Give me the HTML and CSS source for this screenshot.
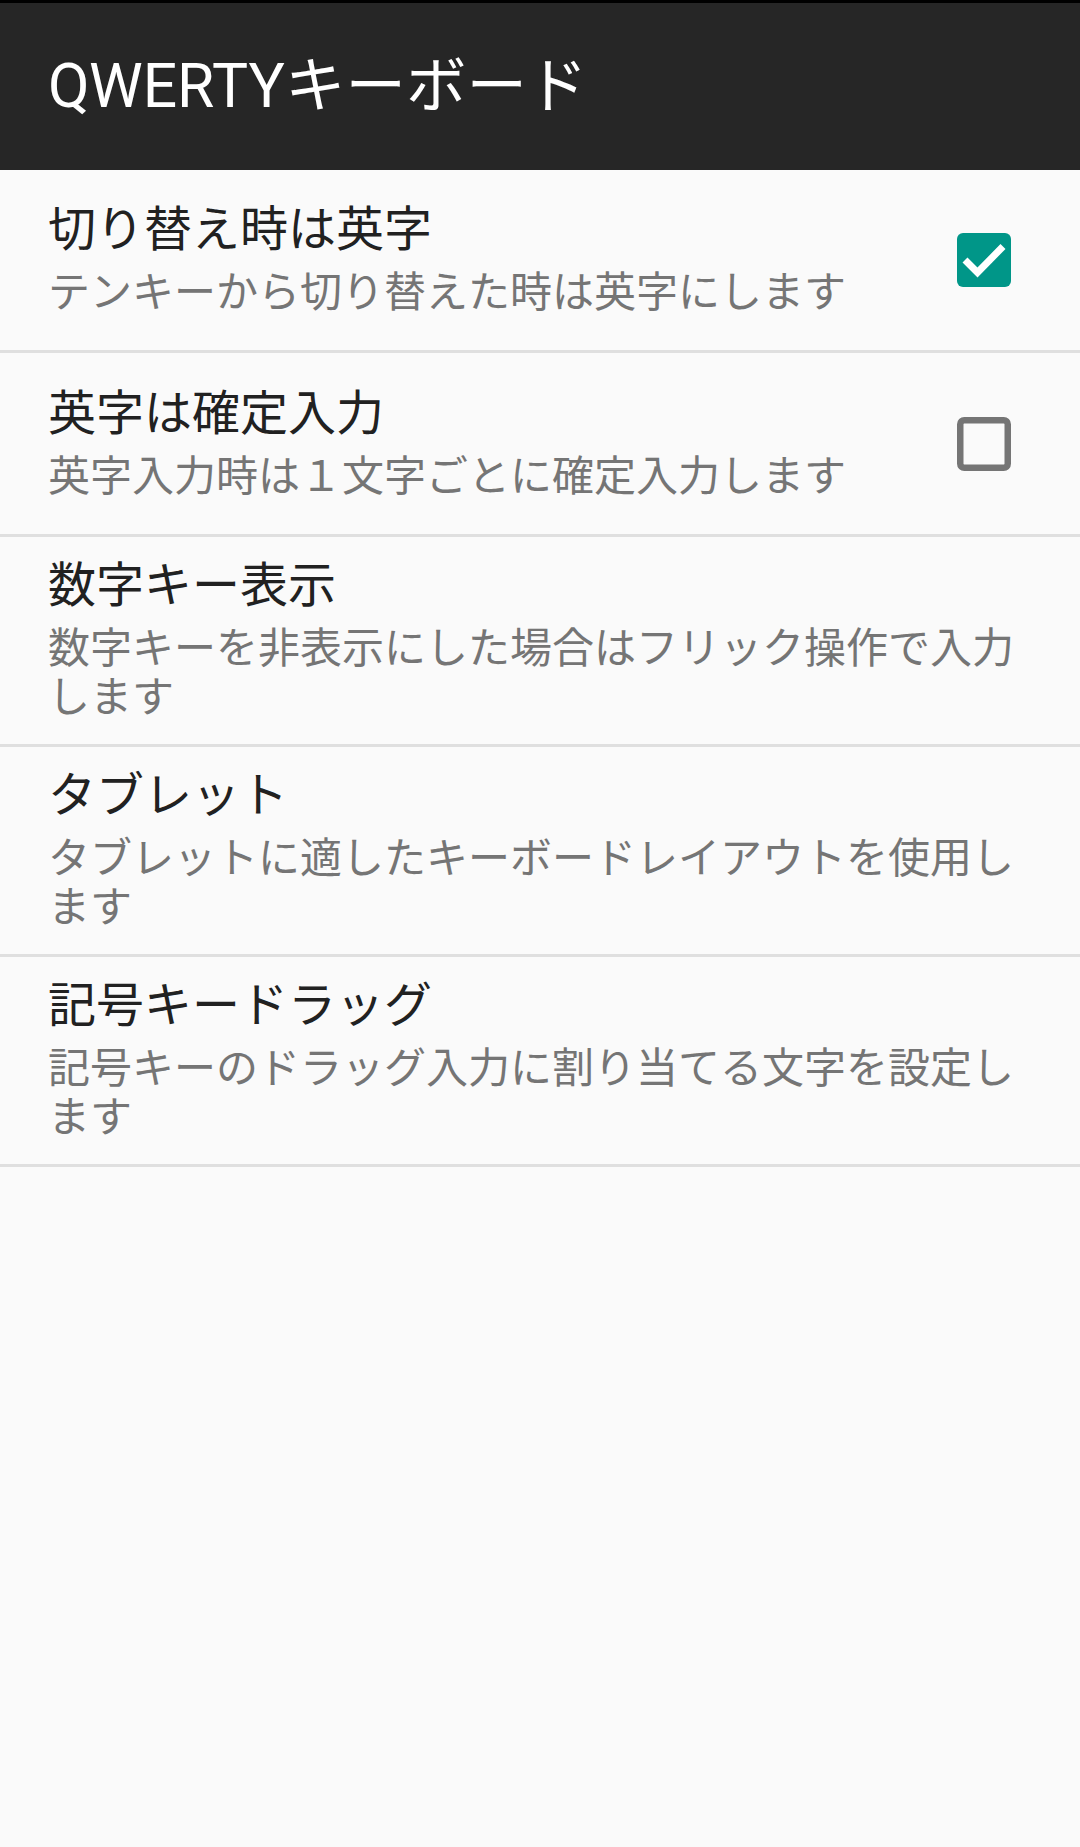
FILE: index.html
```html
<!DOCTYPE html>
<html lang="ja">
<head>
<meta charset="UTF-8" />
<title>QWERTYキーボード</title>
<meta name="viewport" content="width=device-width" />
<link rel="stylesheet" href="styles.css">
</head>
<body>

<div class="appBar">
<div class="appTitle">QWERTYキーボード</div>
</div>

<div class="prefList">

<div class="prefRow">
<div class="prefText">
<div class="prefTitle">切り替え時は英字</div>
<div class="prefSummary">テンキーから切り替えた時は英字にします</div>
</div>
<div class="prefWidget">
<svg class="chk chkOn" width="54" height="54" viewBox="0 0 54 54">
<rect x="0" y="0" width="54" height="54" rx="6" ry="6" fill="#009688"/>
<polyline points="8,27 20.5,39.5 46,13.5" fill="none" stroke="#ffffff" stroke-width="7"/>
</svg>
</div>
</div>

<div class="prefRow">
<div class="prefText">
<div class="prefTitle">英字は確定入力</div>
<div class="prefSummary">英字入力時は１文字ごとに確定入力します</div>
</div>
<div class="prefWidget">
<svg class="chk" width="54" height="54" viewBox="0 0 54 54">
<rect x="3.25" y="3.25" width="47.5" height="47.5" rx="4" ry="4" fill="none" stroke="#757575" stroke-width="6.5"/>
</svg>
</div>
</div>

<div class="prefRow">
<div class="prefText">
<div class="prefTitle">数字キー表示</div>
<div class="prefSummary">数字キーを非表示にした場合はフリック操作で入力します</div>
</div>
</div>

<div class="prefRow">
<div class="prefText">
<div class="prefTitle">タブレット</div>
<div class="prefSummary">タブレットに適したキーボードレイアウトを使用します</div>
</div>
</div>

<div class="prefRow">
<div class="prefText">
<div class="prefTitle">記号キードラッグ</div>
<div class="prefSummary">記号キーのドラッグ入力に割り当てる文字を設定します</div>
</div>
</div>

</div>

</body>
</html>
```

FILE: styles.css
```css
html, body{
margin: 0;
padding: 0;
background: #fafafa;
font-family: Roboto, "Noto Sans CJK JP", sans-serif;
}

body{
min-height: 1847px;
}

.appBar{
height: 167px;
border-top: 3px solid #000;
background: #262626;
display: flex;
align-items: center;
padding: 0 48px;
}

.appTitle{
color: #ffffff;
font-size: 60.5px;
line-height: 70px;
}

.prefRow{
display: flex;
align-items: center;
min-height: 184px;
padding: 0 48px;
box-sizing: border-box;
border-bottom: 3px solid #dfdfdf;
}

.prefRow:first-child{
min-height: 183px;
}

.prefText{
flex: 1;
padding: 21px 0 22px 0;
}

.prefTitle{
color: #212121;
font-size: 48px;
line-height: 56px;
}

.prefSummary{
color: #757575;
font-size: 42px;
line-height: 49px;
margin-top: 10px;
}

.prefWidget{
width: 72px;
display: flex;
justify-content: flex-end;
margin-right: 21px;
}

.chk{
display: block;
}
```
